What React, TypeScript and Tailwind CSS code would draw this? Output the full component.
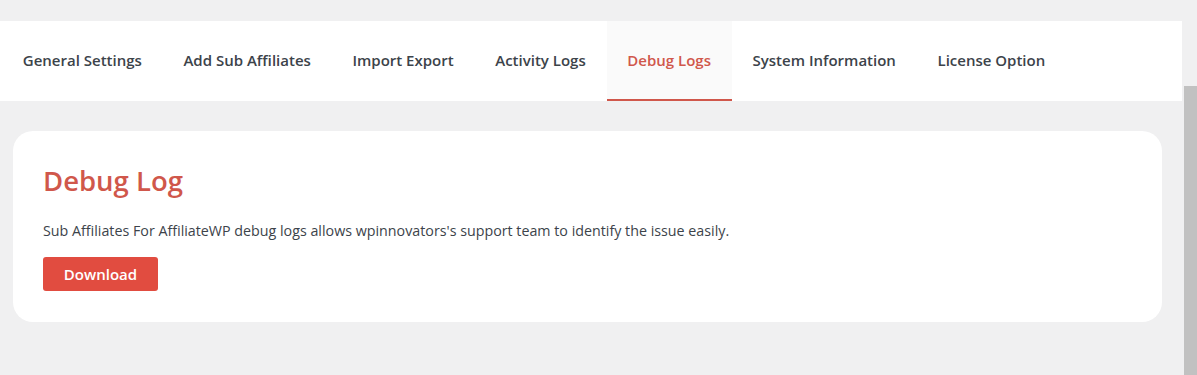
const tabs = [
  'General Settings',
  'Add Sub Affiliates',
  'Import Export',
  'Activity Logs',
  'Debug Logs',
  'System Information',
  'License Option',
]

export default function App() {
  return (
    <div
      className="flex h-[375px] w-[1197px] overflow-hidden bg-[#f0f0f1]"
      style={{ fontFamily: '"Open Sans", "Noto Sans", sans-serif' }}
    >
      <div className="w-[1182px] shrink-0 pt-[21px]">
        <nav className="flex h-[80px] bg-white pl-[2px]">
          {tabs.map((tab) => {
            const active = tab === 'Debug Logs'
            return (
              <div
                key={tab}
                className={
                  active
                    ? 'flex items-center border-b-2 border-[#d0574b] bg-[#fafafa] px-[20.8px] text-[15px] font-semibold text-[#d0574b]'
                    : 'flex items-center border-b-2 border-transparent px-[20.8px] text-[15px] font-semibold text-[#3c434a]'
                }
              >
                {tab}
              </div>
            )
          })}
        </nav>

        <div className="mt-[30px] ml-[13px] mr-[20px] h-[191px] rounded-[20px] bg-white px-[30px] pt-[30px]">
          <h1 className="text-[27.5px] font-semibold leading-[40px] text-[#d0574b]">Debug Log</h1>
          <p className="mt-[20px] text-[14.27px] leading-[20px] text-[#3c434a]">
            Sub Affiliates For AffiliateWP debug logs allows wpinnovators's support team to identify the issue easily.
          </p>
          <button className="mt-[16px] h-[34px] w-[115px] rounded-[3px] bg-[#e14c40] text-[15px] font-semibold text-white">
            Download
          </button>
        </div>
      </div>

      <div className="ml-[2px] flex-1 pt-[86px]">
        <div className="h-full bg-[#c1c1c1]" />
      </div>
    </div>
  )
}
